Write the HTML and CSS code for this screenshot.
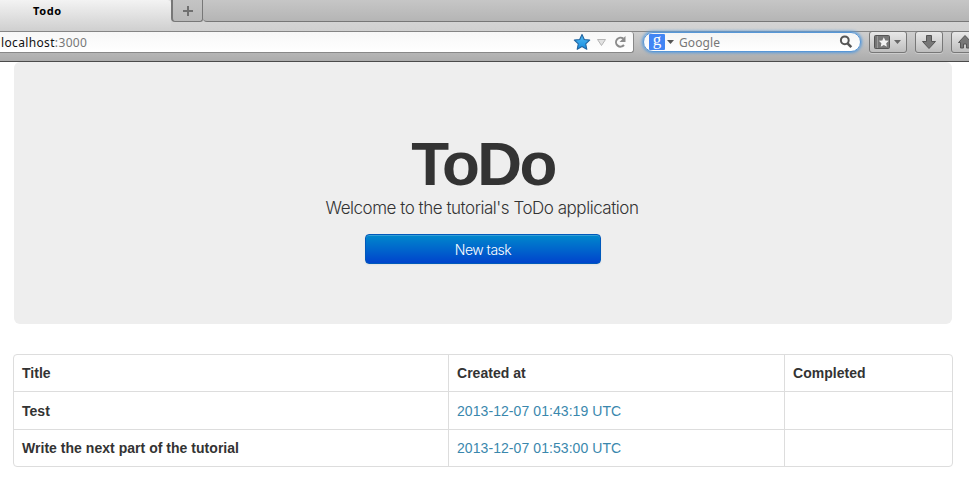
FILE: index.html
```html
<!DOCTYPE html>
<html lang="en">
<head>
<meta charset="utf-8">
<title>Todo</title>
<link rel="stylesheet" href="styles.css">
</head>
<body>
<header class="browser">
  <div class="tabs">
    <div class="tab">Todo</div>
    <div class="newtab"><svg width="12" height="12" viewBox="0 0 12 12"><path d="M6 1v10M1 6h10" stroke="#707070" stroke-width="2"/></svg></div>
    <div class="strip"></div>
  </div>
  <div class="toolbar">
    <div class="location">
      <span class="host">localhost</span><span class="port">:3000</span>
      <svg class="urlicons" width="60" height="20" viewBox="0 0 60 20">
        <defs><linearGradient id="star" x2="0" y2="1"><stop offset="0" stop-color="#52bdf5"/><stop offset="1" stop-color="#168be0"/></linearGradient></defs>
        <path d="M9 2.500l2.300 5 5.400.6-4 3.800 1.100 5.400L9 14.600l-4.800 2.700 1.100-5.400-4-3.800 5.400-.6z" fill="url(#star)" stroke="#2365a0" stroke-width="1.100" stroke-linejoin="round"/>
        <path d="M24.500 7.500h8l-4 6z" fill="#e2e2e2" stroke="#b5b5b5"/>
        <path d="M50.300 6.600A4.500 4.500 0 1 0 51 13" fill="none" stroke="#8b8b8b" stroke-width="2"/>
        <path d="M52.500 4v6h-6z" fill="#8b8b8b"/>
      </svg>
    </div>
    <div class="search">
      <span class="engine">g</span>
      <svg width="7" height="4" viewBox="0 0 7 4"><path d="M0 0h7L3.500 4z" fill="#555"/></svg>
      <span class="hint">Google</span>
      <svg class="glass" width="14" height="14" viewBox="0 0 14 14" fill="none" stroke="#555"><circle cx="5.800" cy="5.300" r="3.900" stroke-width="2"/><path d="M8.500 8.300l3.800 3.900" stroke-width="2.500"/></svg>
    </div>
    <div class="tool bookmarks">
      <svg width="28" height="16" viewBox="0 0 28 16"><rect x=".5" y="1.500" width="15" height="13" rx="1" fill="#777" stroke="#555"/><path d="M3.500 2v12" stroke="#999"/><path d="M9.800 3.200l1.500 3.200 3.500.4-2.600 2.400.7 3.500-3.100-1.700-3.100 1.700.7-3.500-2.600-2.400 3.500-.4z" fill="#f2f2f2"/><path d="M20 6h7l-3.500 4z" fill="#666"/></svg>
    </div>
    <div class="tool download">
      <svg width="16" height="16" viewBox="0 0 16 16"><path d="M5.500 1.500h5v6h4L8 14.500l-6.500-7h4z" fill="#777" stroke="#555"/></svg>
    </div>
    <div class="tool home">
      <svg width="16" height="16" viewBox="0 0 16 16"><path d="M8 1.500L1.500 8.500h2v5.500h3v-4h3v4h3V8.500h2z" fill="#777" stroke="#555"/></svg>
    </div>
  </div>
</header>
<main class="container">
  <section class="hero">
    <h1>ToDo</h1>
    <p>Welcome to the tutorial's ToDo application</p>
    <a class="btn">New task</a>
  </section>
  <table class="tasks">
    <colgroup><col class="c1"><col class="c2"><col></colgroup>
    <thead><tr><th>Title</th><th>Created at</th><th>Completed</th></tr></thead>
    <tbody>
      <tr class="tall"><th>Test</th><td><a>2013-12-07 01:43:19 UTC</a></td><td></td></tr>
      <tr class="last"><th>Write the next part of the tutorial</th><td><a>2013-12-07 01:53:00 UTC</a></td><td></td></tr>
    </tbody>
  </table>
</main>
</body>
</html>
```
FILE: styles.css
```css
* { box-sizing: border-box; }
body { margin: 0; width: 969px; height: 486px; overflow: hidden; background: #fff; color: #333; font-family: "Liberation Sans", sans-serif; font-size: 14px; }
svg { display: block; flex: none; }
.browser { height: 62px; overflow: hidden; border-bottom: 1px solid #4b4b4b; background: linear-gradient(#dedede 0, #d0d0d0 31px, #cfcfcf 32px, #acacac 61px); font-family: "Noto Sans", sans-serif; }
.tabs { display: flex; height: 32px; border-bottom: 1px solid #858585; }
.tab { width: 171px; height: 31px; padding-left: 33px; font-size: 11px; line-height: 22px; font-weight: 700; letter-spacing: .6px; color: #000; background: linear-gradient(#f3f3f3, #cfcfcf); border-top-right-radius: 4px; }
.newtab { width: 32px; height: 22px; display: flex; align-items: center; justify-content: center; border: solid #777; border-width: 0 1px 1px 2px; border-radius: 0 0 3px 4px; background: linear-gradient(#c4c4c4, #b8b8b8); }
.strip { flex: 1; height: 22px; background: linear-gradient(#c6c6c6, #b5b5b5); border-bottom: 1px solid #777; border-bottom-left-radius: 4px; }
.toolbar { display: flex; height: 29px; }
.location { display: flex; align-items: center; flex: none; width: 634px; height: 21px; padding-left: 1px; background: linear-gradient(#f7f7f7, #fff); border: solid #888; border-width: 0 1px 1px 0; border-radius: 0 3px 3px 0; font-size: 12px; letter-spacing: .35px; }
.host { color: #111; }
.port { color: #777; }
.urlicons { margin-left: auto; }
.search { display: flex; align-items: center; flex: none; width: 218px; height: 20px; margin-left: 9px; padding: 0 7px 0 5px; border: 1px solid #5797d7; border-radius: 10px; background: linear-gradient(#f5f5f5, #fff); box-shadow: 0 0 3px 1px #5b9ddd; }
.engine { width: 16px; height: 16px; margin-right: 2px; background: #4285f4; border-radius: 1px; color: #fff; font: 17px/12px "Liberation Serif", serif; text-align: center; }
.hint { margin-left: 5px; font-size: 12px; letter-spacing: .1px; color: #777; }
.glass { margin-left: auto; }
.tool { display: flex; align-items: center; justify-content: center; height: 22px; border: 1px solid #777; border-radius: 3px; background: linear-gradient(#e8e8e8, #bebebe); box-shadow: 0 1px 0 #ccc; flex: none; margin-top: -1px; }
.bookmarks { width: 38px; margin-left: 8px; }
.download { width: 28px; margin-left: 8px; }
.home { width: 28px; margin-left: 8px; }
.container { width: 940px; margin-left: 13px; }
.hero { display: flex; flex-direction: column; align-items: center; width: 938px; height: 262px; margin: 0 1px; padding-top: 72px; background: #eee; border-radius: 6px; }
h1 { margin: 0; font-size: 62px; line-height: 60px; letter-spacing: -2.6px; font-weight: 700; }
p { margin: 0; height: 40px; padding-right: 2px; font: 300 17px/28px Inter, sans-serif; letter-spacing: -.47px; white-space: nowrap; }
.btn { width: 236px; height: 30px; border: 1px solid #0059bb; border-radius: 4px; background: linear-gradient(#08c, #04c); box-shadow: inset 0 1px 0 rgba(255,255,255,.2), 0 1px 2px rgba(0,0,0,.05); color: #fff; font: 300 14px/30px Inter, sans-serif; letter-spacing: -.5px; text-align: center; }
.tasks { width: 940px; margin-top: 30px; table-layout: fixed; border: 1px solid #ddd; border-radius: 4px; border-collapse: separate; border-spacing: 0; }
.c1 { width: 434px; }
.c2 { width: 336px; }
th, td { height: 36px; padding: 0 8px 1px; text-align: left; line-height: 20px; font-size: 14px; letter-spacing: .03px; }
th + th, td { border-left: 1px solid #ddd; }
tbody th, tbody td { border-top: 1px solid #ddd; }
.tall th, .tall td { height: 38px; padding-top: 1px; padding-bottom: 0; }
.last th, .last td { height: 37px; }
td a { color: #3a87ad; letter-spacing: .07px; }
```
